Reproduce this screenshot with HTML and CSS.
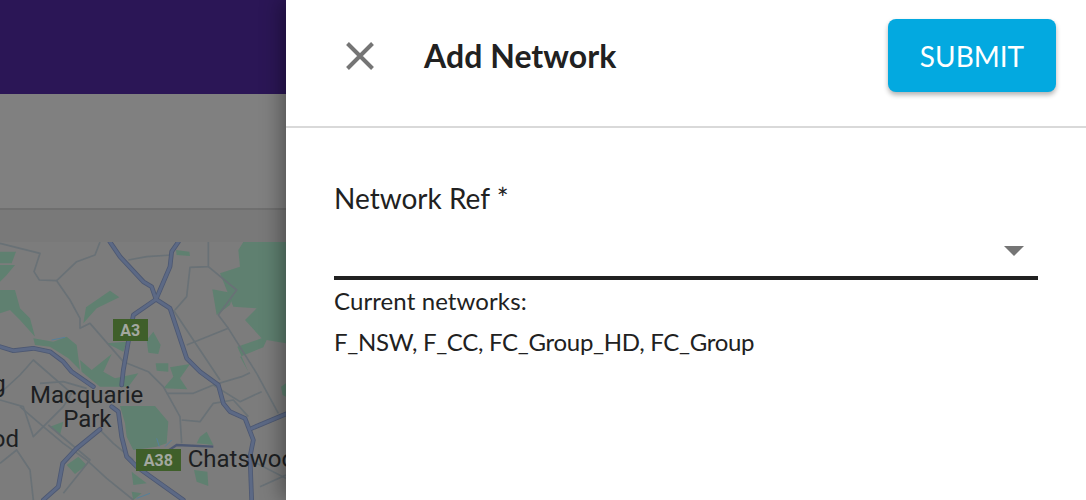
FILE: index.html
```html
<!DOCTYPE html>
<html lang="en">
<head>
<meta charset="utf-8">
<title>Add Network</title>
<link rel="stylesheet" href="styles.css">
</head>
<body>
<div class="page">
  <div class="backdrop">
    <div class="appbar"></div>
    <div class="toolbar"></div>
    <div class="subbar"></div>
    <svg class="map" viewBox="0 36 858 774" width="286" height="258" aria-hidden="true">
      <rect x="0" y="36" width="858" height="774" fill="#7c7c7c"/>
      <g fill="#5f8070">
        <path d="M730 36H858V340L800 330L790 352L720 380L745 425L712 350L785 325L735 270L770 235L700 230L660 130L720 110L715 60Z"/>
        <path d="M637 178L700 190L690 225L650 255Z"/>
        <path d="M0 65H48L35 100H0Z"/>
        <path d="M0 105H45L20 135L0 155Z"/>
        <path d="M0 180H45L60 235L90 265L105 320L60 270L30 240L0 250Z"/>
        <path d="M100 325L160 335L200 320L230 345L240 420L205 385L150 350L105 345Z"/>
        <path d="M258 232L330 182L358 202L290 235L250 280Z"/>
        <path d="M240 390L275 420L335 372L310 425L345 445L415 430L385 470L300 470L245 425Z"/>
        <path d="M320 340L380 335L370 365Z"/>
        <path d="M440 330L460 305L482 345L475 372L445 368Z"/>
        <path d="M467 400H505V425L470 422Z"/>
        <path d="M510 412L570 402L540 445L562 478L490 475L520 440Z"/>
        <path d="M528 60L568 65L570 78L530 75Z"/>
        <path d="M360 528H465L505 575L500 640L470 650L400 660L380 620L375 580Z"/>
        <path d="M150 590L190 575L180 615Z"/>
        <path d="M200 705L235 680L260 705L225 732Z"/>
        <path d="M395 725L440 760L400 765Z"/>
        <path d="M582 720L622 725L625 768L590 755Z"/>
        <path d="M600 620L620 605L640 645L590 640Z"/>
        <path d="M395 785L425 790L400 810Z"/>
        <path d="M843 470L858 460V500L848 495Z"/>
      </g>
      <g fill="none" stroke="#697176" stroke-width="5" stroke-linejoin="round">
        <path d="M0 40L60 55L120 70L102 125L118 150L170 152L210 210L240 265L240 295L270 280L370 395L445 425L490 470L540 560L545 640"/>
        <path d="M170 152L230 95L285 75L300 36"/>
        <path d="M385 90L440 80L515 75"/>
        <path d="M625 36L625 110L570 112L560 200L525 240"/>
        <path d="M625 110L710 180L655 255L685 295L770 430L835 550"/>
        <path d="M560 345L685 295"/>
        <path d="M500 490L580 490L640 465L725 440L750 428"/>
        <path d="M640 465L720 515L785 485"/>
        <path d="M0 510L70 530L100 620L190 530L215 490L100 390L60 435L0 490"/>
        <path d="M60 530L130 590L190 640L260 690L320 745L400 810"/>
        <path d="M0 700L50 660L90 720L100 810"/>
        <path d="M145 585L270 690L190 790"/>
        <path d="M300 600L340 640L400 690"/>
        <path d="M545 570L600 575L640 520L700 510L745 560"/>
        <path d="M770 700L858 745"/>
        <path d="M780 770L858 735"/>
        <path d="M520 240L600 360L660 450"/>
        <path d="M120 460L190 455L260 475"/>
      </g>
      <g fill="none" stroke="#4d5872" stroke-width="14" stroke-linecap="round" stroke-linejoin="round">
        <path d="M330 36L360 80L430 155L455 170L468 208L510 235L545 340L560 385L600 425L655 465L670 520L690 545L735 565L760 630L750 680L755 810"/>
        <path d="M535 36L515 65L510 110L468 208L400 255L385 335L370 420L365 465"/>
        <path d="M0 350L40 362L100 355L150 365L190 395L215 425L280 470"/>
        <path d="M335 530L355 545L365 620L380 680L410 710L480 760L550 810"/>
        <path d="M300 598L230 655L188 700L175 770L130 810"/>
        <path d="M755 595L858 552"/>
      </g>
      <g fill="none" stroke="#5c6985" stroke-width="9" stroke-linecap="round" stroke-linejoin="round">
        <path d="M330 36L360 80L430 155L455 170L468 208L510 235L545 340L560 385L600 425L655 465L670 520L690 545L735 565L760 630L750 680L755 810"/>
        <path d="M535 36L515 65L510 110L468 208L400 255L385 335L370 420L365 465"/>
        <path d="M0 350L40 362L100 355L150 365L190 395L215 425L280 470"/>
        <path d="M335 530L355 545L365 620L380 680L410 710L480 760L550 810"/>
        <path d="M300 598L230 655L188 700L175 770L130 810"/>
        <path d="M755 595L858 552"/>
      </g>
      <path d="M410 665H500L530 645L640 650" fill="none" stroke="#4d5872" stroke-width="7"/>
      <g fill="none" stroke="#55809a" stroke-width="3">
        <path d="M155 330L195 322"/>
        <path d="M470 625L478 650M495 650L515 630"/>
        <path d="M410 805L450 790"/>
      </g>
      <rect x="339" y="267" width="105" height="66" fill="#3f5f2a"/>
      <rect x="408" y="657" width="135" height="66" fill="#3f5f2a"/>
      <g class="shield">
        <text x="391" y="318">A3</text>
        <text x="475" y="708">A38</text>
      </g>
      <g class="place">
        <text x="260" y="520" text-anchor="middle">Macquarie</text>
        <text x="262" y="592" text-anchor="middle">Park</text>
        <text x="563" y="711">Chatswood</text>
        <text x="57" y="652" text-anchor="end">ood</text>
        <text x="17" y="487" text-anchor="end">g</text>
      </g>
    </svg>
  </div>
  <aside class="drawer">
    <header class="drawer-head">
      <svg class="close" viewBox="0 0 28 28" width="28" height="28" aria-hidden="true">
        <path d="M1.5 1.5L26.5 26.5M26.5 1.5L1.5 26.5" stroke="#757575" stroke-width="4" fill="none"/>
      </svg>
      <h1 class="title">Add Network</h1>
      <button class="submit" type="button">SUBMIT</button>
    </header>
    <div class="drawer-body">
      <div class="label">Network Ref *</div>
      <div class="select"><span class="arrow"></span></div>
      <p class="note">Current networks:</p>
      <p class="list">F_NSW, F_CC, FC_Group_HD, FC_Group</p>
    </div>
  </aside>
</div>
</body>
</html>
```

FILE: styles.css
```css
* { box-sizing: border-box; }
html, body { margin: 0; height: 100%; overflow: hidden; }
body { background: #fff; font-family: "Lato", sans-serif; color: #212121; }

.page { display: flex; width: 1086px; height: 500px; }

.backdrop { width: 286px; flex: none; display: flex; flex-direction: column; }
.appbar { height: 94px; background: #2b1656; }
.toolbar { height: 114px; background: #808080; }
.subbar { height: 34px; background: #797979; border-top: 2px solid #6f6f6f; }
.map { display: block; flex: none; }

.drawer {
  flex: 1;
  background: #fff;
  box-shadow: -4px 0 20px rgba(0, 0, 0, 0.38);
  position: relative;
  display: flex;
  flex-direction: column;
}

.drawer-head {
  height: 128px;
  border-bottom: 2px solid #d9d9d9;
  display: flex;
  align-items: center;
  padding: 0 30px 15px 60px;
}
.close { flex: none; }
.title { margin: 0 0 0 50px; font-size: 32px; font-weight: 700; letter-spacing: 0.05px; color: #212121; }
.submit {
  margin-left: auto;
  width: 168px;
  height: 73px;
  border: 0;
  border-radius: 8px;
  background: #03a9e0;
  color: #fff;
  font: 400 28px "Lato", sans-serif;
  box-shadow: 0 3px 5px rgba(0, 0, 0, 0.3);
}

.drawer-body { padding: 53px 48px 0; }
.label { font-size: 28px; line-height: 34px; color: #212121; }
.select { height: 65px; border-bottom: 4px solid #212121; display: flex; justify-content: flex-end; align-items: center; padding: 0 14px 0 0; }
.arrow { width: 0; height: 0; border-left: 10px solid transparent; border-right: 10px solid transparent; border-top: 10px solid #757575; margin-top: 11px; }
.note, .list { margin: 0; font-size: 24px; line-height: 28px; color: #212121; }
.note { margin-top: 7px; letter-spacing: 0.1px; }
.list { margin-top: 13px; letter-spacing: -0.3px; }

.shield text { font: 700 48px "Roboto", sans-serif; fill: #a3a8a0; text-anchor: middle; }
.place text { font: 400 72px "Roboto", sans-serif; fill: #1d1f22; }
```
